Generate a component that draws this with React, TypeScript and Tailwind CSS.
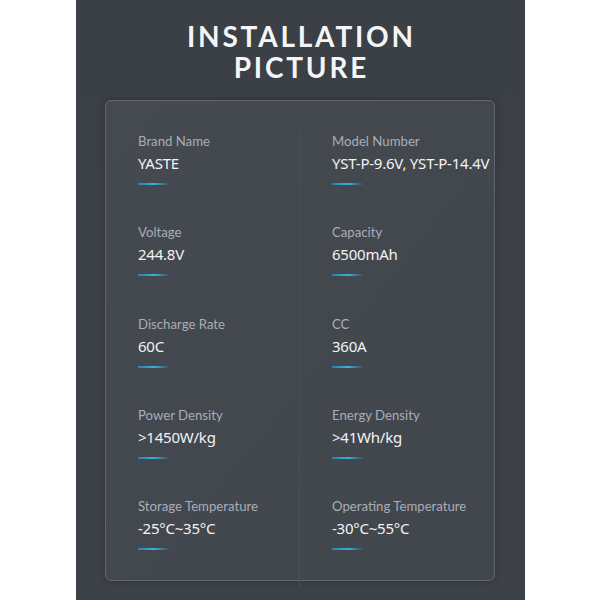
const specs = [
  ["Brand Name", "YASTE", "Model Number", "YST-P-9.6V, YST-P-14.4V"],
  ["Voltage", "244.8V", "Capacity", "6500mAh"],
  ["Discharge Rate", "60C", "CC", "360A"],
  ["Power Density", ">1450W/kg", "Energy Density", ">41Wh/kg"],
  ["Storage Temperature", "-25°C~35°C", "Operating Temperature", "-30°C~55°C"],
];

function Spec({ label, value }: { label: string; value: string }) {
  return (
    <div className="h-[91.25px] pl-[32px]">
      <div className="whitespace-nowrap font-['Lato',sans-serif] text-[13.2px] leading-[18px] text-[#a9aeb6]">
        {label}
      </div>
      <div className="mt-[2px] whitespace-nowrap font-['Noto_Sans',sans-serif] text-[15px] leading-[22px] tracking-[-0.015em] text-[#f2f3f5]">
        {value}
      </div>
      <div className="mt-[9px] h-[2px] w-[32px] bg-gradient-to-r from-[#2f7fa8] via-[#3cb0da] to-transparent" />
    </div>
  );
}

export default function App() {
  return (
    <div className="flex h-[600px] w-[600px] justify-center bg-white font-['Lato','Noto_Sans',sans-serif]">
      <div className="flex h-[600px] w-[449px] flex-col items-center bg-gradient-to-b from-[#3b3f46] to-[#3d4148]">
        {/* Title */}
        <h1 className="mt-[21px] pl-[0.1em] text-center text-[28px] font-bold leading-[31px] tracking-[0.1em] text-[#f4f5f6]">
          INSTALLATION
          <br />
          PICTURE
        </h1>

        {/* Spec card */}
        <div className="mt-[17px] h-[481px] w-[390px] rounded-[6px] border border-[#62676e] bg-gradient-to-br from-[#454950] to-[#41454c] pt-[31px] shadow-[0_0_6px_rgba(0,0,0,0.25)]">
          <div className="grid grid-cols-2">
            <div className="border-r border-[#4c5057]">
              {specs.map((s) => (
                <Spec key={s[0]} label={s[0]} value={s[1]} />
              ))}
            </div>
            <div>
              {specs.map((s) => (
                <Spec key={s[2]} label={s[2]} value={s[3]} />
              ))}
            </div>
          </div>
        </div>
      </div>
    </div>
  );
}
